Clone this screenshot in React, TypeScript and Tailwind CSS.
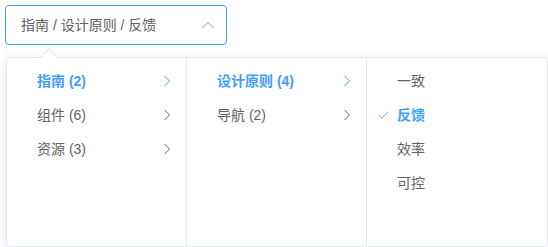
import { Check } from 'lucide-react';

type Node = { label: string; active?: boolean; leaf?: boolean; checked?: boolean };

const columns: Node[][] = [
  [
    { label: '指南 (2)', active: true },
    { label: '组件 (6)' },
    { label: '资源 (3)' },
  ],
  [
    { label: '设计原则 (4)', active: true },
    { label: '导航 (2)' },
  ],
  [
    { label: '一致', leaf: true },
    { label: '反馈', leaf: true, active: true, checked: true },
    { label: '效率', leaf: true },
    { label: '可控', leaf: true },
  ],
];

function ChevronRight() {
  return (
    <svg width="8" height="12" viewBox="0 0 8 12" fill="none">
      <path d="M1.5 1 L6.5 6 L1.5 11" stroke="currentColor" strokeWidth="1" />
    </svg>
  );
}

function Menu({ nodes, last }: { nodes: Node[]; last?: boolean }) {
  return (
    <div className={`w-[180px] h-[188px] py-[6px] flex flex-col ${last ? '' : 'border-r border-[#e4e7ed]'}`}>
      {nodes.map((n) => (
        <div
          key={n.label}
          className={`h-[34px] flex items-center pl-[10px] pr-[15px] text-[14px] ${
            n.active ? 'text-[#409eff] font-bold' : 'text-[#606266]'
          }`}
        >
          <span className="w-[20px] flex items-center">
            {n.checked && <Check size={13} strokeWidth={1.5} className="text-[#409eff]" />}
          </span>
          <span className="flex-1">{n.label}</span>
          {!n.leaf && <ChevronRight />}
        </div>
      ))}
    </div>
  );
}

export default function App() {
  return (
    <div className="w-[548px] h-[247px] bg-white overflow-hidden" style={{ fontFamily: '"Helvetica Neue", "Liberation Sans", "Noto Sans CJK SC", sans-serif' }}>
      <div className="pt-[5px] pl-[5px]">
        <div className="w-[222px] h-[40px] border border-[#409eff] rounded-[4px] flex items-center justify-between pl-[15px] pr-[11px]">
          <span className="text-[14px] text-[#606266]">指南 / 设计原则 / 反馈</span>
          <svg width="14" height="8" viewBox="0 0 14 8" fill="none" className="text-[#c0c4cc]">
            <path d="M1 7 L7 1.5 L13 7" stroke="currentColor" strokeWidth="1.1" />
          </svg>
        </div>
      </div>
      <div className="relative ml-[6px] mt-[12px] w-fit">
        <div className="absolute left-[37px] -top-[6px] w-[12px] h-[12px] rotate-45 bg-white border-l border-t border-[#e4e7ed] z-10" />
        <div className="flex bg-white border border-[#e4e7ed] rounded-[4px] shadow-[0_2px_12px_0_rgba(0,0,0,0.1)]">
          {columns.map((c, i) => (
            <Menu key={i} nodes={c} last={i === columns.length - 1} />
          ))}
        </div>
      </div>
    </div>
  );
}
